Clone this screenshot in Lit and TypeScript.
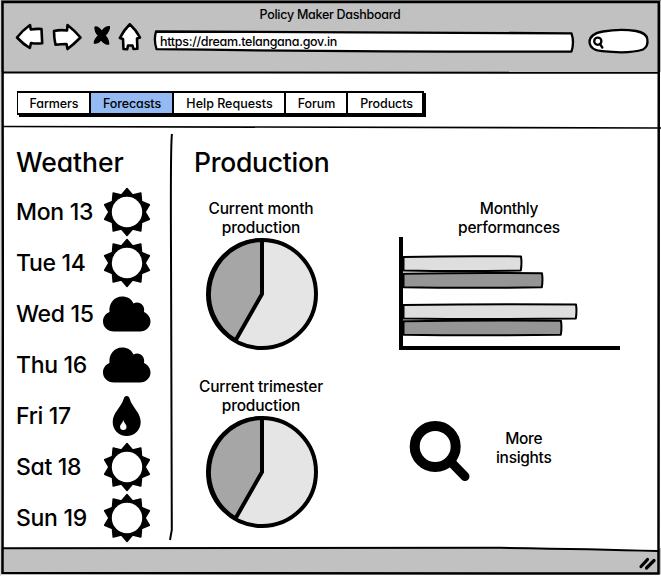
import { LitElement, html, svg, css } from "lit";
import { customElement, property } from "lit/decorators.js";

type Sky = "sun" | "cloud" | "rain";

const spikes = Array.from({ length: 20 }, (_, i) => {
  const r = i % 2 ? 18 : 23.5;
  const a = (i * Math.PI) / 10;
  return `${(24 + r * Math.sin(a)).toFixed(2)},${(24 - r * Math.cos(a)).toFixed(2)}`;
}).join(" ");

const skyShapes = {
  sun: svg`<polygon points=${spikes} stroke="#000" stroke-width="1.500" stroke-linejoin="round"/><circle cx="24" cy="24" r="15.200" fill="#fff"/>`,
  cloud: svg`<path d="M11 41.500C4.500 41.500 0 37 0 31.500C0 27 2.500 23.500 6.500 22C5.500 13 11.500 6.500 19 6.500C24.500 6.500 28.500 9 30.500 13.500C36 10.500 42.500 15 41 22C45 24 47.500 27.500 47.500 31.500C47.500 37 43 41.500 37 41.500Z"/>`,
  rain: svg`<path d="M23.700 4C25.300 4 26.200 5 26.700 6.700C29.300 15.500 37.700 20.500 37.700 30C37.700 38 31.500 44 23.700 44C15.900 44 9.700 38 9.700 30C9.700 20.500 18.100 15.500 20.700 6.700C21.200 5 22.100 4 23.700 4Z"/><path d="M20.300 28C21.300 31.500 23.500 32.500 23.500 34.700A3.200 3.200 0 0 1 17.100 34.700C17.100 32.500 19.500 31.500 20.300 28Z" fill="#fff"/>`,
};

const base = css`
  :host { display: block; font-family: Inter, "Noto Sans", sans-serif; font-weight: 500; font-feature-settings: "cv11" 1; color: #000; white-space: nowrap; }
  svg { display: block; flex: none; overflow: visible; }
`;

@customElement("browser-bar")
class BrowserBar extends LitElement {
  static styles = [base, css`
    .bar { box-sizing: border-box; height: 72px; background: #c1c1c1; padding: 7px 0 0 14px; }
    .title { font-size: 12.500px; line-height: 15px; width: 632px; text-align: center; letter-spacing: -0.27px; }
    .tools { display: flex; height: 32px; }
    .forward { margin-left: 5px; }
    .stop { margin-left: 7px; }
    .home { margin-left: 5px; }
    .address { margin-left: 9px; width: 424px; display: grid; }
    .address > * { grid-area: 1 / 1; }
    .url { padding-left: 8px; font-size: 12.500px; line-height: 39px; letter-spacing: -0.3px; }
    .find { margin-left: 11px; }
    .ink { fill: #fff; stroke: #000; stroke-width: 2.300; stroke-linejoin: round; stroke-linecap: round; }
    .arrow { stroke-width: 2.600; }
  `];
  render() {
    return html`<div class="bar">
      <div class="title">Policy Maker Dashboard</div>
      <div class="tools">
        <svg class="ink arrow" width="32" height="32" viewBox="14 22 32 32"><path d="M17 37.500Q23 30 30 25L30.800 29.500Q36 28.500 41.500 29L42.200 43.200Q36 44 31 43L29.800 48Q23 44 17 37.500Z"/></svg>
        <svg class="ink arrow forward" width="33" height="32" viewBox="51 22 33 32"><path d="M54 31Q60 29.500 67 30.500L67.500 25Q74 30 80.500 37.500Q74 44 67.500 49L66.500 44Q61 44 55.500 44.800Q54 38 54 31Z"/></svg>
        <svg class="stop" width="21" height="32" viewBox="91 22 21 32"><path d="M95 27Q98.500 26.500 101.800 31.500Q105 26.500 109.500 26.700Q109.500 31 105 35.500Q108.500 39 108.800 44Q105 45 101.200 40Q98 44 94.200 43Q94.500 39 98.500 35.700Q94.500 31.500 95 27Z" stroke="#000" stroke-width="1.200" stroke-linejoin="round"/></svg>
        <svg class="ink arrow home" width="26" height="32" viewBox="117 22 26 32"><path d="M129.800 24.300Q136 30 140 37.500L137 38.500L137.400 48.700L133.500 49L132.500 45.500H128L127.200 49.200L123.500 49L123 39L119.800 38Q124 30 129.800 24.300Z"/></svg>
        <div class="address">
          <svg class="ink" width="424" height="32" viewBox="152 22 424 32"><path d="M156 31.500Q300 31.500 571.500 33.300Q574.500 42 571.500 51.500Q380 52 156.500 49.200Q153.500 40 156 31.500Z"/></svg>
          <span class="url">https://dream.telangana.gov.in</span>
        </div>
        <svg class="ink find" width="64" height="32" viewBox="587 22 64 32"><path d="M603 31.500Q620 28.500 636 31Q646.500 33 647.300 39Q648.500 46.500 643 49.500Q630 54 602 51.200Q590 50 589.500 42Q590 33.500 603 31.500Z"/><circle cx="597.800" cy="41.200" r="3.600"/><path d="M600 44L602.300 47.500"/></svg>
      </div>
    </div>`;
  }
}

@customElement("tab-strip")
class TabStrip extends LitElement {
  static styles = [base, css`
    .strip { box-sizing: border-box; height: 55px; padding: 19px 0 0 17px; }
    .tabs { box-sizing: border-box; display: flex; width: 407px; height: 24px; border: 2px solid #000; border-left-width: 1.500px; background: #fff; box-shadow: 2px 2px 0 #000; }
    .tab { box-sizing: border-box; text-align: center; border-right: 2px solid #000; font-size: 12.500px; line-height: 22px; height: 20px; letter-spacing: -0.1px; padding-left: 1px; }
    .tab:nth-child(1) { width: 73px; }
    .tab:nth-child(2) { width: 83px; background: #93baf3; }
    .tab:nth-child(3) { width: 112px; letter-spacing: 0; }
    .tab:nth-child(4) { width: 62px; }
    .tab:nth-child(5) { flex: 1; border: 0; padding-left: 3px; }
  `];
  render() {
    return html`<div class="strip"><div class="tabs">
      ${["Farmers", "Forecasts", "Help Requests", "Forum", "Products"].map((t) => html`<div class="tab">${t}</div>`)}
    </div></div>`;
  }
}

@customElement("weather-list")
class WeatherList extends LitElement {
  static styles = [base, css`
    .heading { font-size: 26.500px; line-height: 36px; height: 42px; letter-spacing: -0.050px; }
    .day { display: flex; justify-content: space-between; align-items: center; height: 51px; width: 135px; }
    .name { font-size: 23px; letter-spacing: -0.300px; }
  `];
  days: [string, Sky][] = [["Mon 13", "sun"], ["Tue 14", "sun"], ["Wed 15", "cloud"], ["Thu 16", "cloud"], ["Fri 17", "rain"], ["Sat 18", "sun"], ["Sun 19", "sun"]];
  render() {
    return html`<div class="heading">Weather</div>
      ${this.days.map(([d, s]) => html`<div class="day"><span class="name">${d}</span><svg width="48" height="48" viewBox="0 0 48 48">${skyShapes[s]}</svg></div>`)}`;
  }
}

@customElement("pie-panel")
class PiePanel extends LitElement {
  @property() period = "";
  static styles = [base, css`
    :host { width: 140px; text-align: center; }
    .label { font-size: 15.500px; line-height: 19px; letter-spacing: -0.2px; }
    .pie { margin: 1px 0 0 15px; }
  `];
  render() {
    return html`<div class="label">Current ${this.period}<br>production</div>
      <svg class="pie" width="112" height="112" viewBox="0 0 112 112" stroke="#000" stroke-width="4">
        <circle cx="56" cy="56" r="54" fill="#e5e5e5"/>
        <path d="M56 2V56L29.500 102.500A54 54 0 0 1 56 2Z" fill="#a6a6a6"/>
      </svg>`;
  }
}

@customElement("bar-panel")
class BarPanel extends LitElement {
  static styles = [base, css`
    .label { width: 220px; text-align: center; font-size: 15.500px; line-height: 19px; letter-spacing: -0.27px; }
    .bar { stroke: #000; stroke-width: 2; stroke-linejoin: round; }
  `];
  bars = [[256.5, 521, "#dedede"], [273.3, 542, "#959595"], [304.5, 576, "#dedede"], [320.8, 561, "#959595"]] as const;
  render() {
    return html`<div class="label">Monthly<br>performances</div>
      <svg width="221" height="113" viewBox="399 237 221 113">
        ${this.bars.map(([y, x, c]) => svg`<path class="bar" fill=${c} d="M403.500 ${y + 0.5}Q${(403 + x) / 2} ${y - 0.8} ${x} ${y}Q${x + 1} ${y + 7} ${x - 0.2} ${y + 14}Q${(403 + x) / 2} ${y + 15} 403.500 ${y + 14}Z"/>`)}
        <path d="M401 237V348H620" fill="none" stroke="#000" stroke-width="4"/>
      </svg>`;
  }
}

@customElement("app-root")
class AppRoot extends LitElement {
  static styles = [base, css`
    :host { position: relative; width: 661px; height: 576px; overflow: hidden; background: #fff; }
    .frame { position: absolute; top: 0; left: 0; fill: none; stroke: #000; pointer-events: none; }
    .window { display: grid; grid-template-rows: 72px 55px 421px 28px; height: 576px; }
    .body { display: grid; grid-template-columns: 178px 1fr; padding-left: 16px; }
    .weather { padding-top: 17px; }
    .heading { font-size: 26.500px; line-height: 36px; padding-top: 17px; height: 55px; box-sizing: border-box; letter-spacing: -0.27px; }
    .row { display: grid; grid-template-columns: 140px 1fr; height: 178px; column-gap: 68px; }
    .panels { padding-top: 17px; margin-left: -3px; }
    .more { display: flex; gap: 26px; }
    .lens { margin-top: 43px; margin-left: 9px; }
    .more-text { margin-top: 52px; text-align: center; font-size: 15.500px; line-height: 19px; letter-spacing: -0.3px; }
    .status { background: #c1c1c1; height: 26px; }
  `];
  render() {
    return html`<div class="window">
        <browser-bar></browser-bar>
        <tab-strip></tab-strip>
        <div class="body">
          <weather-list class="weather"></weather-list>
          <div>
            <div class="heading">Production</div>
            <div class="panels">
              <div class="row"><pie-panel period="month"></pie-panel><bar-panel></bar-panel></div>
              <div class="row"><pie-panel period="trimester"></pie-panel>
                <div class="more">
                  <svg class="lens" width="62" height="62" viewBox="408 420 62 62" fill="none" stroke="#000"><circle cx="435.200" cy="446.500" r="20.500" stroke-width="10"/><path d="M450 461L465 476.500" stroke-width="9" stroke-linecap="round"/></svg>
                  <div class="more-text">More<br>insights</div>
                </div>
              </div>
            </div>
          </div>
        </div>
        <div class="status"></div>
      </div>
      <svg class="frame" width="661" height="576" viewBox="0 0 661 576">
        <path d="M500 547.500H658V551Q590 549 500 547.800Z" fill="#fff" stroke="none"/>
        <path d="M0 0.300H661" stroke="#70756f" stroke-width="1"/>
        <path d="M0 0V576" stroke="#d8d8d8" stroke-width="2"/>
        <path d="M2.500 2H658.800L658.500 573.500Q300 573.700 2.500 573L2.800 300Z" stroke-width="2.500"/>
        <path d="M3 72.500L658 72.700" stroke-width="2"/>
        <path d="M3 126.500Q350 126.500 661 128" stroke-width="1.600"/>
        <path d="M172 134Q170.500 142 171 250L171.800 530L170 540" stroke-width="2"/>
        <path d="M3 548.200Q250 547 500 547.800Q590 549 658 551" stroke-width="2"/>
        <path d="M641 566.500L647.500 559.500M646.500 568L654 560.500" stroke-width="3.200" stroke-linecap="round"/>
      </svg>`;
  }
}
